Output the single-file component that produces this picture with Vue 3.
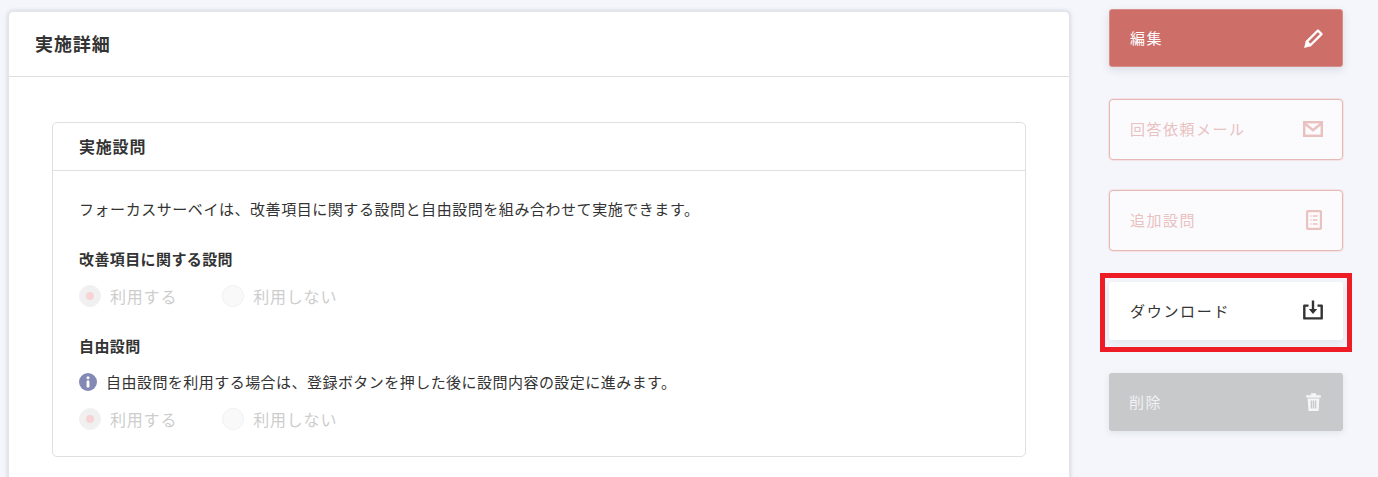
<template>
  <div class="page">
    <main class="main">
      <section class="card">
        <h2 class="card-title">実施詳細</h2>
        <div class="card-body">
          <div class="panel">
            <h3 class="panel-title">実施設問</h3>
            <div class="panel-body">
              <p class="lead">フォーカスサーベイは、改善項目に関する設問と自由設問を組み合わせて実施できます。</p>

              <h4 class="field-label first">改善項目に関する設問</h4>
              <div class="radios">
                <label class="radio" v-for="opt in options" :key="opt.label">
                  <span :class="['dot', { on: opt.on }]"></span>{{ opt.label }}
                </label>
              </div>

              <h4 class="field-label second">自由設問</h4>
              <p class="note">
                <svg class="info" width="18" height="18" viewBox="0 0 18 18">
                  <circle cx="9" cy="9" r="9" fill="#8488b5" />
                  <circle cx="9" cy="4.8" r="1.5" fill="#fff" />
                  <rect x="7.6" y="7.4" width="2.8" height="7" rx="0.6" fill="#fff" />
                </svg>
                自由設問を利用する場合は、登録ボタンを押した後に設問内容の設定に進みます。
              </p>
              <div class="radios second-radios">
                <label class="radio" v-for="opt in options" :key="opt.label">
                  <span :class="['dot', { on: opt.on }]"></span>{{ opt.label }}
                </label>
              </div>
            </div>
          </div>
        </div>
      </section>
    </main>

    <aside class="side">
      <button class="btn btn-edit">
        編集
        <svg class="pencil" width="20" height="20" viewBox="0 0 19 19">
          <path d="M14.2 2.4l3.4 3.4L7 16.4 3.6 13z" fill="none" stroke="#fff" stroke-width="2.2" stroke-linejoin="round" />
          <path d="M2.6 12.6l4.8 4.8L1 19z" fill="#fff" />
        </svg>
      </button>

      <button class="btn btn-outline btn-mail">
        回答依頼メール
        <svg width="20" height="16" viewBox="0 0 20 16">
          <rect x="1.2" y="1.2" width="17.6" height="13.6" fill="none" stroke="#e9c1bf" stroke-width="2.4" />
          <path d="M1.5 2.2l8.5 7 8.5-7" fill="none" stroke="#e9c1bf" stroke-width="2.4" />
        </svg>
      </button>

      <button class="btn btn-outline btn-extra">
        追加設問
        <svg class="doc" width="16" height="20" viewBox="0 0 16 20">
          <rect x="1.1" y="1.1" width="13.8" height="17.8" rx="0.8" fill="none" stroke="#e9c1bf" stroke-width="2.2" />
          <path d="M4.4 6h1.2M6.8 6h4.8M4.4 10h1.2M6.8 10h4.8M4.4 14h1.2M6.8 14h4.8" stroke="#e9c1bf" stroke-width="1.4" />
        </svg>
      </button>

      <div class="highlight-wrap">
        <button class="btn btn-download">
          ダウンロード
          <svg width="20" height="20" viewBox="0 0 20 20">
            <path d="M5.5 5.6H1.3v12.8h17.4V5.6h-4.2" fill="none" stroke="#333" stroke-width="2.4" stroke-linejoin="round" />
            <path d="M10 0.5v10" stroke="#333" stroke-width="2.4" />
            <path d="M5.8 9h8.4L10 14z" fill="#333" />
          </svg>
        </button>
        <div class="highlight"></div>
      </div>

      <button class="btn btn-delete">
        削除
        <svg class="trash" width="15" height="20" viewBox="0 0 16 20">
          <path d="M0.5 3h15v2H0.5zM5.5 3V1h5v2" fill="#f6f6f7" stroke="#f6f6f7" stroke-width="0.6" />
          <path fill-rule="evenodd" d="M1.8 6.2h12.4L13.4 19.5H2.6zM5 8.5v8.5h1.5V8.5zM7.25 8.5v8.5h1.5V8.5zM9.5 8.5v8.5H11V8.5z" fill="#f6f6f7" />
        </svg>
      </button>
    </aside>
  </div>
</template>

<script setup>
const options = [
  { label: '利用する', on: true },
  { label: '利用しない', on: false }
]
</script>

<style>
html,
body {
  margin: 0;
  background: #f4f6fb;
}
</style>

<style scoped>
.page {
  display: flex;
  align-items: flex-start;
  width: 1378px;
  height: 477px;
  overflow: hidden;
  font-family: "Noto Sans CJK JP", "Noto Sans", sans-serif;
  color: #333;
}

.main {
  padding: 11px 0 0 8px;
}

.card {
  width: 1062px;
  height: 500px;
  box-sizing: border-box;
  background: #fff;
  border: 1px solid #e4e5e8;
  border-radius: 5px;
  box-shadow: 0 0 4px rgba(60, 64, 90, 0.22);
}

.card-title {
  margin: 0;
  height: 65px;
  box-sizing: border-box;
  padding-left: 26px;
  border-bottom: 1px solid #dfdfe2;
  font-size: 18px;
  font-weight: 700;
  letter-spacing: 0.05em;
  line-height: 62px;
}

.card-body {
  padding: 45px 43px 0;
}

.panel {
  height: 335px;
  box-sizing: border-box;
  border: 1px solid #dedfe1;
  border-radius: 5px;
}

.panel-title {
  margin: 0;
  height: 48px;
  box-sizing: border-box;
  padding-left: 26px;
  border-bottom: 1px solid #dedfe1;
  font-size: 16px;
  font-weight: 700;
  letter-spacing: 0.05em;
  line-height: 46px;
}

.panel-body {
  padding: 27px 26px 0;
}

.lead {
  margin: 0;
  font-size: 15px;
  letter-spacing: 0.55px;
  line-height: 22px;
}

.field-label {
  margin: 0;
  font-size: 15px;
  font-weight: 700;
  letter-spacing: 0.4px;
  line-height: 22px;
}

.field-label.first {
  margin-top: 28px;
}

.field-label.second {
  margin-top: 27px;
}

.radios {
  display: flex;
  gap: 45px;
  margin-top: 14px;
  height: 24px;
}

.second-radios {
  margin-top: 13px;
}

.radio {
  display: flex;
  align-items: center;
  gap: 9px;
  font-size: 16px;
  letter-spacing: 0.05em;
  color: #cdcdcd;
}

.dot {
  position: relative;
  width: 22px;
  height: 22px;
  box-sizing: border-box;
  border-radius: 50%;
  background: #f9f9f9;
  border: 1px solid #f1f1f1;
}

.dot.on {
  background: #f0f0f0;
}

.dot.on::after {
  content: "";
  position: absolute;
  left: 6px;
  top: 6px;
  width: 8px;
  height: 8px;
  border-radius: 50%;
  background: #f8d3d5;
}

.note {
  display: flex;
  align-items: center;
  gap: 9px;
  margin: 13px 0 0;
  font-size: 15px;
  letter-spacing: 0.46px;
  line-height: 24px;
}

.info {
  flex: none;
}

.side {
  display: flex;
  flex-direction: column;
  margin-left: 39px;
  padding-top: 9px;
  width: 235px;
}

.btn {
  display: flex;
  align-items: center;
  justify-content: space-between;
  width: 234px;
  box-sizing: border-box;
  padding: 0 20px 2px;
  border: 0;
  border-radius: 3px;
  font-family: inherit;
  font-size: 15px;
  letter-spacing: 0.1em;
  line-height: 1;
  cursor: pointer;
}

.btn svg {
  flex: none;
}

.btn .doc {
  margin-right: 1px;
}

.btn .pencil {
  margin-top: 2px;
  margin-right: -1px;
}

.btn .trash {
  margin-top: 2px;
  margin-right: 2px;
}

.btn-edit {
  height: 58px;
  color: #fff;
  background: #cd6e69;
  border: 1px solid #d88e8a;
  box-shadow: 0 3px 8px rgba(60, 64, 90, 0.14);
}

.btn-outline {
  height: 61px;
  padding: 0 19px 2px 20px;
  color: #e9c1bf;
  background: #fbfbfe;
  border: 1px solid #e6b9b7;
  border-radius: 4px;
  box-shadow: 0 0 0 1px #f5e3e4;
}

.btn-mail {
  margin-top: 32px;
}

.btn-extra {
  margin-top: 30px;
}

.highlight-wrap {
  position: relative;
  margin-top: 31px;
}

.btn-download {
  height: 58px;
  padding-left: 21px;
  color: #333;
  background: #fff;
  letter-spacing: 1.7px;
  box-shadow: 0 3px 8px rgba(60, 64, 90, 0.1);
}

.highlight {
  position: absolute;
  left: -9px;
  top: -9px;
  width: 252px;
  height: 79px;
  box-sizing: border-box;
  border: 5px solid #ee1c25;
}

.btn-delete {
  height: 58px;
  margin-top: 33px;
  color: #f1f1f2;
  background: #c8c9cb;
  box-shadow: 0 2px 6px rgba(60, 64, 90, 0.1);
}
</style>
